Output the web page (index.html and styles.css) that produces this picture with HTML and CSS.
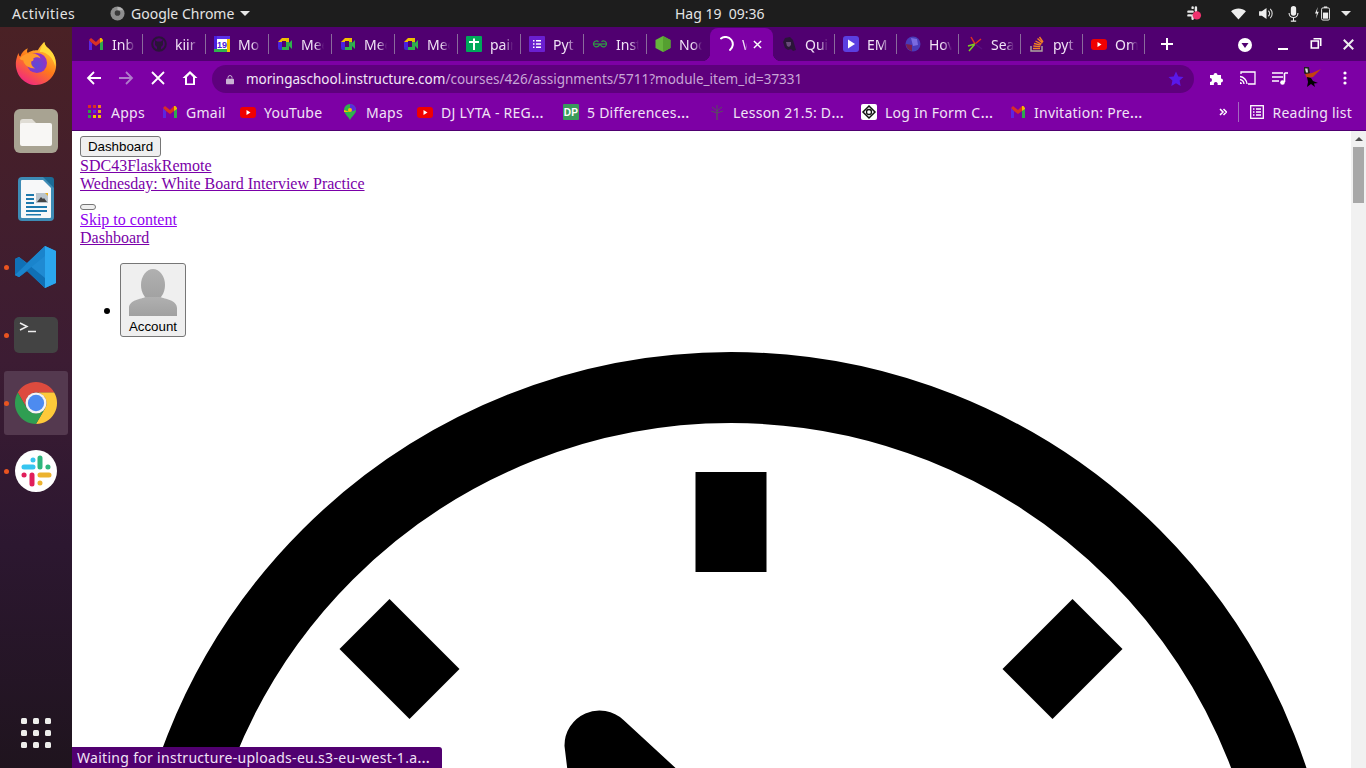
FILE: index.html
```html
<!DOCTYPE html>
<html lang="en">
<head>
<meta charset="utf-8">
<title>Wednesday: White Board Interview Practice</title>
<link rel="stylesheet" href="styles.css">
</head>
<body>
<svg class="defs" width="0" height="0" aria-hidden="true">
  <symbol id="gmail" viewBox="0 0 16 16">
    <path d="M1 4v10h3V7z" fill="#5b25e0"/>
    <path d="M12 7v7h3V4z" fill="#2fa84f"/>
    <path d="M1 4l2-2 5 4 4-4v5L8 10 4 7 1 4z" fill="#d93025"/>
    <path d="M12 2h1.500L15 4v1l-3 2z" fill="#f5b800"/>
  </symbol>
  <symbol id="meet" viewBox="0 0 16 16">
    <path d="M1 6l4-4h7v3H5v1z" fill="#f5c000"/>
    <path d="M1 6h4v5H1z" fill="#4a20e0"/>
    <path d="M1 11h4v3H3a2 2 0 0 1-2-2z" fill="#3a2ad0"/>
    <path d="M5 11h7v3H5z" fill="#2fb24c"/>
    <path d="M9 2h2a1 1 0 0 1 1 1v3H9z" fill="#e8c000"/>
    <path d="M9 6h3v5H9z" fill="#2fa84f"/>
    <path d="M12 7l3-3v9l-3-3z" fill="#2fb24c"/>
  </symbol>
  <symbol id="yt" viewBox="0 0 16 16">
    <rect x="0" y="3" width="16" height="11" rx="3" fill="#f00000"/>
    <path d="M6.500 6v5l4-2.500z" fill="#fff"/>
  </symbol>
</svg>

<header class="topbar">
  <div class="top-left">
    <span class="activities">Activities</span>
    <span class="app-menu">
      <svg class="app-icon" viewBox="0 0 16 16"><circle cx="8" cy="8" r="7.500" fill="#8d8d8d"/><circle cx="8" cy="7.500" r="3" fill="#3a3a3a"/><path d="M8 1a7 7 0 0 1 6 3.500H8z" fill="#b5b5b5"/></svg>
      <span>Google Chrome</span>
      <i class="caret"></i>
    </span>
  </div>
  <div class="clock-label">Hag 19&nbsp; 09:36</div>
  <div class="tray">
    <svg class="tray-slack" viewBox="0 0 16 16"><g stroke="#e8e8e8" stroke-width="2.600" stroke-linecap="round"><path d="M1.500 6H6M6 1.500v.5M9.500 1.500V5M1.500 10H4M6 10v3.500"/></g><circle cx="10.500" cy="10" r="4.500" fill="#f0326e"/></svg>
    <svg class="tray-wifi" viewBox="0 0 16 14"><path d="M0 4.500C4.500.5 11.500.5 16 4.500L8 13.500z" fill="#eee"/></svg>
    <svg class="tray-vol" viewBox="0 0 16 14"><path d="M0 4.500h3L8 1v12L3 9.500H0z" fill="#eee"/><path d="M10 4a4 4 0 0 1 0 6M12 2a7 7 0 0 1 0 10" stroke="#ddd" stroke-width="1.200" fill="none"/></svg>
    <svg class="tray-mic" viewBox="0 0 12 18"><rect x="3" y="0" width="6" height="11" rx="3" fill="#eee"/><path d="M1 8a5 5 0 0 0 10 0M6 13v4M3 17h6" stroke="#eee" stroke-width="1.200" fill="none"/></svg>
    <svg class="tray-bat" viewBox="0 0 16 16"><path d="M3 1 0 8h2l-1 5 3-7H2z" fill="#eee"/><rect x="7" y="2" width="8.500" height="13" rx="1.500" fill="none" stroke="#eee"/><rect x="9.500" y="0.500" width="3.500" height="1.500" fill="#eee"/><rect x="8.500" y="7" width="5.500" height="6.500" fill="#eee"/></svg>
    <i class="caret tray-caret"></i>
  </div>
</header>

<div class="desktop">
  <nav class="dock">
    <div class="dock-item">
      <svg class="dock-icon" viewBox="0 0 48 48">
        <defs>
          <linearGradient id="ffo" x1="0.800" y1="0" x2="0.200" y2="1"><stop offset="0" stop-color="#ffd13a"/><stop offset="0.500" stop-color="#ff7a1a"/><stop offset="1" stop-color="#f0208a"/></linearGradient>
          <radialGradient id="ffp" cx="0.500" cy="0.600" r="0.600"><stop offset="0" stop-color="#5b4bd8"/><stop offset="1" stop-color="#9b2ec0"/></radialGradient>
        </defs>
        <path d="M33 1c1 6 5 6 9 12 4 6 4 11 4 13 0 12-10 22-22 22S2 38 2 25c0-5 2-10 3-12 0 2 1 4 2 4 1-4 4-7 8-9-1 3-1 4 0 5 4-3 8-3 11-3 2-4 5-7 7-9z" fill="url(#ffo)"/>
        <circle cx="25" cy="24" r="11" fill="url(#ffp)"/>
        <path d="M6 19c4-4 9-6 14-5 5 0 8 2 9 5-3-2-6-1-8 0 1 1 0 3-2 3-1 3 1 6 4 8-6 0-12-3-13-9-2 0-3-1-4-2z" fill="#ff9a2a"/>
        <path d="M33 1c1 6 5 6 9 12 3 5 4 10 3 15-1-6-5-12-11-15-2-1-4-1-6-1 1-4 3-8 5-11z" fill="#ffd93a"/>
      </svg>
    </div>
    <div class="dock-item">
      <svg class="dock-icon" viewBox="0 0 44 44">
        <rect width="44" height="44" rx="6" fill="#a8a392"/>
        <path d="M6 13a3 3 0 0 1 3-3h9l4 4v6H6z" fill="#e0ddd5"/>
        <rect x="6" y="14" width="32" height="23" rx="2" fill="#f8f7f5"/>
      </svg>
    </div>
    <div class="dock-item">
      <svg class="dock-icon" viewBox="0 0 44 44">
        <path d="M8 0h24l8 8v32a4 4 0 0 1-4 4H8a4 4 0 0 1-4-4V4a4 4 0 0 1 4-4z" fill="#3d8bb5"/>
        <path d="M8 3h21l8 8v29a1 1 0 0 1-1 1H8a1 1 0 0 1-1-1V4a1 1 0 0 1 1-1z" fill="#f7f8f9"/>
        <path d="M29 0h8a3 3 0 0 1 3 3v8z" fill="#1c6b96"/>
        <path d="M12 17h8v2h-8zM12 21h8v2h-8zM12 25h8v2h-8zM12 29h21v2H12zM12 33h21v2H12zM12 37h15v1.500H12z" fill="#1d79ad"/>
        <rect x="22" y="16" width="12" height="10" fill="#b9c4cc"/>
        <path d="M23 25l4-5 2 2 1-1 3 4z" fill="#444"/>
        <path d="M31 16h3v3z" fill="#e8b020"/>
      </svg>
    </div>
    <div class="dock-item running">
      <svg class="dock-icon" viewBox="0 0 44 44">
        <path d="M31 1l11 5v32l-11 5L13 26l-8 6-4-2V14l4-2 8 6z" fill="#1f8ad2"/>
        <path d="M31 1l11 5v32l-11 5z" fill="#2ba6ee"/>
        <path d="M1 14l4-2 26 21v10L13 26l-8 6-4-2z" fill="#1070b5"/>
        <path d="M31 1v10L5 32l-4-2z" fill="#1a84cc"/>
      </svg>
    </div>
    <div class="dock-item running">
      <svg class="dock-icon" viewBox="0 0 44 36">
        <rect width="44" height="36" rx="5" fill="#434343"/>
        <path d="M6 6l7 3.500-7 3.500" stroke="#eee" stroke-width="1.500" fill="none"/>
        <path d="M14 14.500h8" stroke="#eee" stroke-width="1.500"/>
      </svg>
    </div>
    <div class="dock-item running active">
      <span class="tile">
        <svg class="dock-icon" viewBox="-23 -23 46 46">
          <path d="M-19.050-11A22 22 0 0 1 19.050-11H0A11 11 0 0 0-9.500 5.500Z" fill="#dd4b3e"/>
          <path transform="rotate(120)" d="M-19.050-11A22 22 0 0 1 19.050-11H0A11 11 0 0 0-9.500 5.500Z" fill="#fdc93a"/>
          <path transform="rotate(240)" d="M-19.050-11A22 22 0 0 1 19.050-11H0A11 11 0 0 0-9.500 5.500Z" fill="#2f9e52"/>
          <circle r="11" fill="#f4f4f4"/>
          <circle r="8.500" fill="#4d8bf0"/>
        </svg>
      </span>
    </div>
    <div class="dock-item running">
      <svg class="dock-icon" viewBox="-22 -22 44 44">
        <circle r="21" fill="#fff"/>
        <g stroke-width="5" stroke-linecap="round" fill="none">
          <path d="M-12-4h9M-3-11v.1" stroke="#36c5f0"/>
          <path d="M4-13v9M12-4h-.1" stroke="#2eb67d"/>
          <path d="M4 4h9M4 12v-.1" stroke="#ecb22e"/>
          <path d="M-4 4v9M-12 4h.1" stroke="#e01e5a"/>
        </g>
      </svg>
    </div>
    <div class="dock-apps">
      <i></i><i></i><i></i><i></i><i></i><i></i><i></i><i></i><i></i>
    </div>
  </nav>

  <main class="browser">
    <div class="tabstrip">
      <div class="tab"><span class="tab-in"><svg class="fav"><use href="#gmail"/></svg><span class="lbl">Inb</span></span></div>
      <div class="tab"><span class="tab-in"><svg class="fav" viewBox="0 0 16 16"><circle cx="8" cy="8" r="6.800" fill="none" stroke="#2a1438" stroke-width="2"/><path d="M4 4l2.200 1.500h3.600L12 4v5l-2 2v4H6v-4L4 9z" fill="#2a1438"/></svg><span class="lbl">kiir</span></span></div>
      <div class="tab"><span class="tab-in"><svg class="fav" viewBox="0 0 16 16"><rect width="16" height="16" fill="#f5c000"/><rect x="0" y="0" width="3" height="16" fill="#4a20e0"/><rect y="13" width="13" height="3" fill="#2fb24c"/><rect x="3" y="3" width="10" height="10" fill="#fff"/><rect x="3" width="13" height="3" fill="#5a30e8"/><text x="8" y="11.500" class="cal">19</text></svg><span class="lbl">Mo</span></span></div>
      <div class="tab"><span class="tab-in"><svg class="fav"><use href="#meet"/></svg><span class="lbl">Mee</span></span></div>
      <div class="tab"><span class="tab-in"><svg class="fav"><use href="#meet"/></svg><span class="lbl">Mee</span></span></div>
      <div class="tab"><span class="tab-in"><svg class="fav"><use href="#meet"/></svg><span class="lbl">Mee</span></span></div>
      <div class="tab"><span class="tab-in"><svg class="fav" viewBox="0 0 16 16"><rect width="16" height="16" rx="1" fill="#00a85a"/><path d="M3 5h4V2.500h2V5h4v2H9v7H7V7H3z" fill="#fff"/></svg><span class="lbl">pair</span></span></div>
      <div class="tab"><span class="tab-in"><svg class="fav" viewBox="0 0 16 16"><rect width="16" height="16" rx="1" fill="#6a1fd0"/><path d="M4 4h1.500v1.500H4zM7 4h5v1.500H7zM4 7.200h1.500v1.500H4zM7 7.200h5v1.500H7zM4 10.500h1.500V12H4zM7 10.500h5V12H7z" fill="#fff"/></svg><span class="lbl">Pyt</span></span></div>
      <div class="tab"><span class="tab-in"><svg class="fav" viewBox="0 0 16 16"><g fill="none" stroke="#2f9e44" stroke-width="1.200"><path d="M1 8h14"/><path d="M7.500 8a3 3 0 1 1-1-2.300M8.500 8a3 3 0 1 0 1-2.300"/></g></svg><span class="lbl">Inst</span></span></div>
      <div class="tab no-sep"><span class="tab-in"><svg class="fav" viewBox="0 0 16 16"><path d="M8 0l7.500 4v8L8 16 .5 12V4z" fill="#66b53c"/><path d="M8 0l7.500 4v8L8 16z" fill="#559f30"/></svg><span class="lbl">Nod</span></span></div>
      <div class="tab active"><span class="tab-in"><svg class="fav" viewBox="0 0 16 16"><path d="M3 2.500A6.500 6.500 0 0 1 12 14" fill="none" stroke="#fff" stroke-width="2" stroke-linecap="round"/></svg><span class="lbl lbl-active">W</span><svg class="tab-x" viewBox="0 0 10 10"><path d="M1 1l8 8M9 1L1 9" stroke="#fff" stroke-width="1.600"/></svg></span></div>
      <div class="tab narrow"><span class="tab-in"><svg class="fav" viewBox="0 0 16 16"><path d="M2 6l2-4 5-1 3 3 3 10-3 1-2-2-3 1-3-2z" fill="#2a1538"/><path d="M5 6h5v3l-2 2-2-1z" fill="#6a4a7a"/></svg><span class="lbl">Qui</span></span></div>
      <div class="tab narrow"><span class="tab-in"><svg class="fav" viewBox="0 0 16 16"><rect width="16" height="16" rx="3" fill="#5b3fe0"/><path d="M5 3.500v9L12 8z" fill="#fff"/></svg><span class="lbl">EM</span></span></div>
      <div class="tab narrow"><span class="tab-in"><svg class="fav" viewBox="0 0 16 16"><circle cx="8" cy="8" r="7.500" fill="#4a3ab8"/><path d="M1 8a7 7 0 0 0 6 7V9z" fill="#7a1f50"/><path d="M6 2l6 1 1 6-5 1z" fill="#7a6ae0"/></svg><span class="lbl">Hov</span></span></div>
      <div class="tab narrow"><span class="tab-in"><svg class="fav" viewBox="0 0 16 16"><path d="M8 8L4 1M8 8l6-5" stroke="#e03020" stroke-width="1.500"/><path d="M8 8L2 15M8 8L1 10" stroke="#7ccf20" stroke-width="1.500"/><path d="M8 8l7 5" stroke="#5a1080" stroke-width="1.500"/></svg><span class="lbl">Sea</span></span></div>
      <div class="tab narrow"><span class="tab-in"><svg class="fav" viewBox="0 0 16 16"><path d="M2 10v5h11v-5" fill="none" stroke="#b0a8a0" stroke-width="1.400"/><path d="M4 12.500h7M4.300 10l7 .6M5 7.500l6.800 1.600M6.500 5l6 3.200M8.500 2.500l5 4.500M10.500 1l3.500 5" stroke="#f48024" stroke-width="1.400"/></svg><span class="lbl">pyt</span></span></div>
      <div class="tab narrow"><span class="tab-in"><svg class="fav"><use href="#yt"/></svg><span class="lbl">Om</span></span></div>
      <svg class="new-tab" viewBox="0 0 12 12"><path d="M6 0v12M0 6h12" stroke="#fff" stroke-width="2"/></svg>
      <div class="win-ctl">
        <svg class="ctl-drop" viewBox="0 0 14 14"><circle cx="7" cy="7" r="7" fill="#fff"/><path d="M3.500 5h7L7 10z" fill="#500070"/></svg>
        <svg class="ctl-min" viewBox="0 0 10 2"><rect width="10" height="2" fill="#fff"/></svg>
        <svg class="ctl-max" viewBox="0 0 11 11"><path d="M3 .800h7.200V8M.8 3h7v7h-7z" fill="none" stroke="#fff" stroke-width="1.600"/></svg>
        <svg class="ctl-close" viewBox="0 0 10 10"><path d="M.7.700l8.600 8.600M9.300.700L.7 9.300" stroke="#eee" stroke-width="1.800"/></svg>
      </div>
    </div>

    <div class="toolbar">
      <svg class="nav-btn" viewBox="0 0 16 16"><path d="M15 8H2M8 2L2 8l6 6" fill="none" stroke="#fff" stroke-width="1.800"/></svg>
      <svg class="nav-btn" viewBox="0 0 16 16"><path d="M1 8h13M8 2l6 6-6 6" fill="none" stroke="#b07ccb" stroke-width="1.800"/></svg>
      <svg class="nav-btn" viewBox="0 0 16 16"><path d="M2 2l12 12M14 2L2 14" fill="none" stroke="#fff" stroke-width="1.800"/></svg>
      <svg class="nav-btn" viewBox="0 0 16 16"><path d="M8 1L0.500 8H3v7h10V8h2.500zM5 13.500V7l3-3 3 3v6.500z" fill="#fff"/></svg>
      <div class="omnibox">
        <svg class="lock" viewBox="0 0 10 12"><path d="M2.500 5V3.500a2.500 2.500 0 0 1 5 0V5" fill="none" stroke="#c9b3d3" stroke-width="1.200"/><rect y="5" width="10" height="7" rx="1" fill="#c9b3d3"/></svg>
        <span class="url"><span class="host">moringaschool.instructure.com</span>/courses/426/assignments/5711?module_item_id=37331</span>
        <svg class="star" viewBox="0 0 16 16"><path d="M8 .500l2.300 5 5.200.6-3.900 3.500 1.100 5.400L8 12.300 3.300 15l1.100-5.400L.5 6.100l5.200-.6z" fill="#5a18e8"/></svg>
      </div>
      <div class="ext">
        <svg class="ext-puzzle" viewBox="0 0 16 16"><path d="M1 5h3.500a2 2 0 1 1 4 0H12v3.500a2 2 0 1 1 0 4V15H8.500a2 2 0 1 0-3.500 0H1v-3a2 2 0 1 0 0-4z" fill="#fff"/></svg>
        <svg class="ext-cast" viewBox="0 0 16 14"><path d="M1 3V1h14v12H8" fill="none" stroke="#fff" stroke-width="1.300"/><path d="M0 5.500a8 8 0 0 1 7 7.500M0 8.500a5 5 0 0 1 4 4.500" fill="none" stroke="#fff" stroke-width="1.300"/><path d="M0 11a2 2 0 0 1 2 2H0z" fill="#fff"/></svg>
        <svg class="ext-media" viewBox="0 0 16 13"><path d="M0 1h11M0 5h11M0 9h7" stroke="#fff" stroke-width="1.500"/><path d="M12.500 1H16M12.500 1v9" stroke="#fff" stroke-width="1.600"/><circle cx="10.500" cy="10.500" r="2.300" fill="#fff"/></svg>
        <svg class="ext-duck" viewBox="0 0 20 20"><path d="M2 0h5l1 6-3 3-3-3z" fill="#222"/><path d="M3 1.500h2.500l.5 4H4z" fill="#ddd"/><path d="M3 7l7-1 9-4-8 8-6 1z" fill="#c4420f"/><path d="M5 10l4 1 2 3 5 2-4 .5 1 3.500-4-3-4 3 1-5z" fill="#000"/></svg>
        <svg class="ext-menu" viewBox="0 0 4 14"><circle cx="2" cy="2" r="1.600" fill="#fff"/><circle cx="2" cy="7" r="1.600" fill="#fff"/><circle cx="2" cy="12" r="1.600" fill="#fff"/></svg>
      </div>
    </div>

    <div class="bookmarks">
      <div class="bm"><svg class="fav" viewBox="0 0 16 16"><path d="M1 1h3v3H1z" fill="#d93025"/><path d="M6 1h3v3H6z" fill="#d93025"/><path d="M11 1h3v3h-3z" fill="#f08020"/><path d="M1 6h3v3H1z" fill="#2f9e44"/><path d="M6 6h3v3H6z" fill="#5a2ae0"/><path d="M11 6h3v3h-3z" fill="#e8a020"/><path d="M1 11h3v3H1z" fill="#2f9e44"/><path d="M6 11h3v3H6z" fill="#f5c000"/><path d="M11 11h3v3h-3z" fill="#f5c000"/></svg><span>Apps</span></div>
      <div class="bm"><svg class="fav"><use href="#gmail"/></svg><span>Gmail</span></div>
      <div class="bm"><svg class="fav"><use href="#yt"/></svg><span>YouTube</span></div>
      <div class="bm"><svg class="fav" viewBox="0 0 16 16"><path d="M8 0a6 6 0 0 1 6 6c0 4-4 6-6 10-2-4-6-6-6-10a6 6 0 0 1 6-6z" fill="#2fb24c"/><path d="M8 0a6 6 0 0 1 6 6L8 8z" fill="#5a2ae0"/><path d="M2 6l6 2-6 0z" fill="#f5c000"/><circle cx="8" cy="6" r="2" fill="#f5c000"/></svg><span>Maps</span></div>
      <div class="bm"><svg class="fav"><use href="#yt"/></svg><span>DJ LYTA - REG<span class="ell">…</span></span></div>
      <div class="bm"><svg class="fav" viewBox="0 0 16 16"><rect width="16" height="16" rx="1" fill="#3a9a5c"/><text x="8" y="12" class="dp">DP</text></svg><span>5 Differences<span class="ell">…</span></span></div>
      <div class="bm"><svg class="fav" viewBox="0 0 16 16"><path d="M8 6v10" stroke="#5b4a62" stroke-width="1.500"/><path d="M3 3l5 4 5-4M8 7V1M2 7l6 2 6-2" stroke="#5b4a62" fill="none"/></svg><span>Lesson 21.5: D<span class="ell">…</span></span></div>
      <div class="bm"><svg class="fav" viewBox="0 0 16 16"><rect width="16" height="16" rx="2" fill="#fff"/><path d="M8 2l6 6-6 6-6-6z" fill="none" stroke="#111" stroke-width="1.500"/><circle cx="8" cy="8" r="2.500" fill="none" stroke="#111" stroke-width="1.300"/></svg><span>Log In Form C<span class="ell">…</span></span></div>
      <div class="bm"><svg class="fav"><use href="#gmail"/></svg><span>Invitation: Pre<span class="ell">…</span></span></div>
      <div class="bm-end">
        <svg class="more" viewBox="0 0 8 8"><path d="M1 1l3 3-3 3M4.500 1l3 3-3 3" fill="none" stroke="#fff" stroke-width="1.500"/></svg>
        <i class="bm-sep"></i>
        <svg class="reading" viewBox="0 0 14 14"><rect x=".7" y=".7" width="12.600" height="12.600" fill="none" stroke="#fff" stroke-width="1.300"/><path d="M3 4h1.500M6 4h5M3 7h1.500M6 7h5M3 10h1.500M6 10h5" stroke="#fff" stroke-width="1.300"/></svg>
        <span>Reading list</span>
      </div>
    </div>

    <div class="viewport">
      <div class="page">
        <button class="btn">Dashboard</button>
        <div class="line"><a class="visited" href="#">SDC43FlaskRemote</a></div>
        <div class="line"><a class="visited" href="#">Wednesday: White Board Interview Practice</a></div>
        <button class="btn-empty" aria-label="Menu"></button>
        <div class="line"><a class="link" href="#">Skip to content</a></div>
        <div class="line"><a class="visited" href="#">Dashboard</a></div>
        <ul class="menu">
          <li class="menu-item">
            <i class="bullet"></i>
            <button class="btn-account">
              <svg class="avatar" viewBox="0 0 48 47">
                <defs><linearGradient id="ava" x1="0" y1="0" x2="0" y2="1"><stop offset="0" stop-color="#b0b0b0"/><stop offset="1" stop-color="#a0a0a0"/></linearGradient></defs>
                <ellipse cx="24" cy="16" rx="12" ry="16" fill="url(#ava)"/>
                <path d="M0 47V39c0-8 12-9 17-11h14c5 2 17 3 17 11v8z" fill="url(#ava)"/>
              </svg>
              <span>Account</span>
            </button>
          </li>
        </ul>
        <svg class="bigclock" viewBox="0 0 1212 1212">
          <circle cx="606" cy="606" r="570.500" fill="none" stroke="#000" stroke-width="71"/>
          <rect x="570.500" y="120" width="71" height="100"/>
          <path d="M264.500 247l-50 50 70 70 50-50z"/>
          <path d="M947.500 247l-70 70 50 50 70-70z"/>
          <path d="M439.500 394A35 35 0 0 1 498.500 368L620 480H450Z"/>
        </svg>
      </div>
      <div class="scrollbar">
        <i class="sb-up"></i>
        <i class="sb-thumb"></i>
      </div>
      <div class="status">Waiting for instructure-uploads-eu.s3-eu-west-1.a<span class="ell">…</span></div>
    </div>
  </main>
</div>
</body>
</html>
```
FILE: styles.css
```css
* { box-sizing: border-box; }
html, body { margin: 0; padding: 0; }
body {
  width: 1366px;
  height: 768px;
  overflow: hidden;
  display: flex;
  flex-direction: column;
  font-family: "Noto Sans", "Open Sans", sans-serif;
  background: #000;
}
.defs { position: absolute; }
svg { display: block; flex: none; }
.ell { font-size: 16px; line-height: 1; }

/* GNOME top bar */
.topbar {
  height: 27px;
  flex: none;
  background: #1d1d1d;
  color: #e4e4e4;
  font-size: 14px;
  display: grid;
  grid-template-columns: 663px auto 1fr;
  align-items: center;
  padding: 0 15px 0 12px;
}
.top-left { display: flex; align-items: center; }
.activities { width: 98px; letter-spacing: .5px; }
.app-menu { display: flex; align-items: center; }
.app-icon { width: 15px; height: 15px; margin-right: 6px; }
.caret {
  width: 0;
  height: 0;
  border-left: 5px solid transparent;
  border-right: 5px solid transparent;
  border-top: 5px solid #e8e8e8;
  margin-left: 6px;
}
.clock-label { font-size: 14px; }
.tray { display: flex; align-items: center; justify-content: flex-end; }
.tray-slack { width: 15px; height: 15px; margin-right: 29px; }
.tray-wifi { width: 15px; height: 13px; margin-right: 13px; }
.tray-vol { width: 15px; height: 13px; margin-right: 14px; }
.tray-mic { width: 11px; height: 16px; margin-right: 16px; }
.tray-bat { width: 15px; height: 15px; margin-right: 6px; }
.tray-caret { margin-left: 5px; }

.desktop { flex: 1; display: flex; min-height: 0; }

/* Ubuntu dock */
.dock {
  width: 72px;
  flex: none;
  padding-top: 2px;
  padding-bottom: 1px;
  display: flex;
  flex-direction: column;
  align-items: center;
  background: linear-gradient(180deg, #4a2125 0%, #3c1c33 45%, #2c1730 70%, #1f141e 100%);
}
.dock-item {
  width: 72px;
  height: 68px;
  flex: none;
  display: flex;
  align-items: center;
  justify-content: center;
  position: relative;
}
.dock-icon { width: 44px; height: 44px; }
.running::before {
  content: "";
  position: absolute;
  left: 4px;
  top: 32px;
  width: 5px;
  height: 5px;
  border-radius: 50%;
  background: #e95420;
}
.active .tile {
  width: 64px;
  height: 64px;
  border-radius: 3px;
  background: #54394f;
  display: flex;
  align-items: center;
  justify-content: center;
}
.dock-apps {
  margin-top: auto;
  width: 68px;
  height: 68px;
  padding: 18px;
  display: grid;
  grid-template-columns: repeat(3, 6px);
  grid-template-rows: repeat(3, 6px);
  gap: 6px;
  justify-content: center;
  align-content: center;
}
.dock-apps i { background: #eeeeec; border-radius: 1.500px; }

/* Chrome */
.browser { flex: 1; min-width: 0; display: flex; flex-direction: column; background: #7d00a5; }
.tabstrip {
  height: 34px;
  flex: none;
  background: #500070;
  display: flex;
  align-items: flex-end;
  padding-left: 8px;
  color: #f1e3f6;
  font-size: 14px;
}
.tab {
  width: 63px;
  height: 33px;
  flex: none;
  display: flex;
  align-items: center;
  position: relative;
}
.tab.narrow { width: 62px; }
.tab-in {
  width: 100%;
  height: 20px;
  padding-left: 8px;
  display: flex;
  align-items: center;
  border-right: 1px solid #8a6a9c;
  margin-top: -1px;
}
.tab.no-sep .tab-in, .tab.active .tab-in { border-right-color: transparent; }
.fav { width: 16px; height: 16px; flex: none; }
.lbl {
  margin-left: 8px;
  width: 23px;
  overflow: hidden;
  white-space: nowrap;
  -webkit-mask-image: linear-gradient(to right, #000 60%, transparent);
  mask-image: linear-gradient(to right, #000 60%, transparent);
}
.lbl-active { width: 5px; }
.tab-x { width: 9px; height: 9px; margin-left: 6px; }
.tab.active {
  background: #7d00a5;
  border-radius: 8px 8px 0 0;
}
.tab.active::before, .tab.active::after {
  content: "";
  position: absolute;
  bottom: 0;
  width: 8px;
  height: 8px;
}
.tab.active::before { left: -8px; background: radial-gradient(circle at 0 0, transparent 8px, #7d00a5 8.500px); }
.tab.active::after { right: -8px; background: radial-gradient(circle at 100% 0, transparent 8px, #7d00a5 8.500px); }
.cal { font: bold 9px "Liberation Sans", sans-serif; text-anchor: middle; fill: #4a20e0; }
.dp { font: bold 10px "Liberation Sans", sans-serif; text-anchor: middle; fill: #fff; }
.new-tab { width: 12px; height: 12px; margin: 0 0 11px 16px; }
.win-ctl { display: flex; align-items: center; margin-left: 65px; height: 33px; }
.ctl-drop { width: 14px; height: 14px; }
.ctl-min { width: 10px; height: 2px; margin: 8px 0 0 26px; }
.ctl-max { width: 12px; height: 11px; margin: -2px 0 0 22px; }
.ctl-close { width: 11px; height: 11px; margin: 0 0 0 21px; }

.toolbar {
  height: 34px;
  flex: none;
  display: flex;
  align-items: center;
  background: #7d00a5;
  padding-left: 14px;
}
.nav-btn { width: 16px; height: 16px; margin-right: 16px; }
.omnibox {
  width: 982px;
  height: 28px;
  margin: 2px 0 0 -2px;
  border-radius: 14px;
  background: #5e007d;
  display: flex;
  align-items: center;
  padding-left: 14px;
  flex: none;
}
.lock { width: 8px; height: 11px; margin-right: 12px; }
.url { font-size: 13.500px; color: #c8a6d6; white-space: nowrap; flex: none; width: 922px; }
.host { color: #f3e8f7; }
.star { width: 16px; height: 16px; }
.ext { display: flex; align-items: center; margin-left: 15px; }
.ext-puzzle { width: 16px; height: 16px; }
.ext-cast { width: 16px; height: 14px; margin-left: 15px; }
.ext-media { width: 16px; height: 13px; margin-left: 16px; }
.ext-duck { width: 20px; height: 20px; margin-left: 14px; margin-top: -3px; }
.ext-menu { width: 4px; height: 14px; margin-left: 21px; }

.bookmarks {
  height: 36px;
  flex: none;
  background: #7d00a5;
  color: #f1e3f6;
  font-size: 14px;
  letter-spacing: .25px;
  display: grid;
  grid-template-columns: 75px 78px 102px 75px 146px 146px 152px 149px 1fr auto;
  align-items: center;
  padding: 0 14px 1px 15px;
  border-bottom: 1px solid #4f0070;
}
.bm { display: flex; align-items: center; gap: 8px; white-space: nowrap; }
.bm-end { grid-column: 10; display: flex; align-items: center; }
.more { width: 8px; height: 8px; }
.bm-sep { width: 1px; height: 20px; background: #a468bf; margin: 0 11px 0 11px; }
.reading { width: 14px; height: 14px; margin-right: 8px; }

/* Page */
.viewport { flex: 1; min-height: 0; display: flex; position: relative; background: #fff; }
.page {
  flex: 1;
  min-width: 0;
  overflow: hidden;
  padding: 5px 0 0 8px;
  font: 16px/18px "Liberation Serif", serif;
  color: #000;
}
.line { height: 18px; }
.visited { color: #7a00a8; }
.link { color: #9000f0; }
.btn {
  display: block;
  width: 81px;
  height: 21px;
  padding: 0;
  background: #efefef;
  border: 1px solid #767676;
  border-radius: 3px;
  font: 13.333px "Liberation Sans", sans-serif;
  color: #000;
}
.btn-empty {
  display: block;
  width: 16px;
  height: 6px;
  padding: 0;
  margin: 11px 0 1px;
  background: #efefef;
  border: 1px solid #767676;
  border-radius: 3px;
}
.menu { list-style: none; margin: 16px 0; padding: 0 0 0 24px; }
.menu-item { display: flex; align-items: center; gap: 10px; }
.bullet { width: 6px; height: 6px; margin-top: 22px; border-radius: 50%; background: #000; }
.btn-account {
  width: 66px;
  height: 74px;
  padding: 5px 0 0;
  background: #efefef;
  border: 1px solid #767676;
  border-radius: 3px;
  font: 13.333px/15px "Liberation Sans", sans-serif;
  color: #000;
  display: flex;
  flex-direction: column;
  align-items: center;
  gap: 3px;
}
.avatar { width: 48px; height: 47px; }
.bigclock { width: 1212px; height: 1212px; margin: -1px 0 0 45px; }

.scrollbar {
  width: 15px;
  flex: none;
  background: #f1f1f1;
  display: flex;
  flex-direction: column;
  align-items: center;
  padding-top: 6px;
}
.sb-up {
  width: 0;
  height: 0;
  border-left: 4px solid transparent;
  border-right: 4px solid transparent;
  border-bottom: 4px solid #505050;
}
.sb-thumb { width: 11px; height: 56px; margin-top: 6px; background: #a8a8a8; }

.status {
  position: absolute;
  left: 0;
  bottom: 0;
  width: 370px;
  height: 21px;
  padding-left: 5px;
  background: #510070;
  color: #f1e3f6;
  font: 14px/21px "Noto Sans", sans-serif;
  letter-spacing: .3px;
  border-radius: 0 3px 0 0;
  white-space: nowrap;
}
```
